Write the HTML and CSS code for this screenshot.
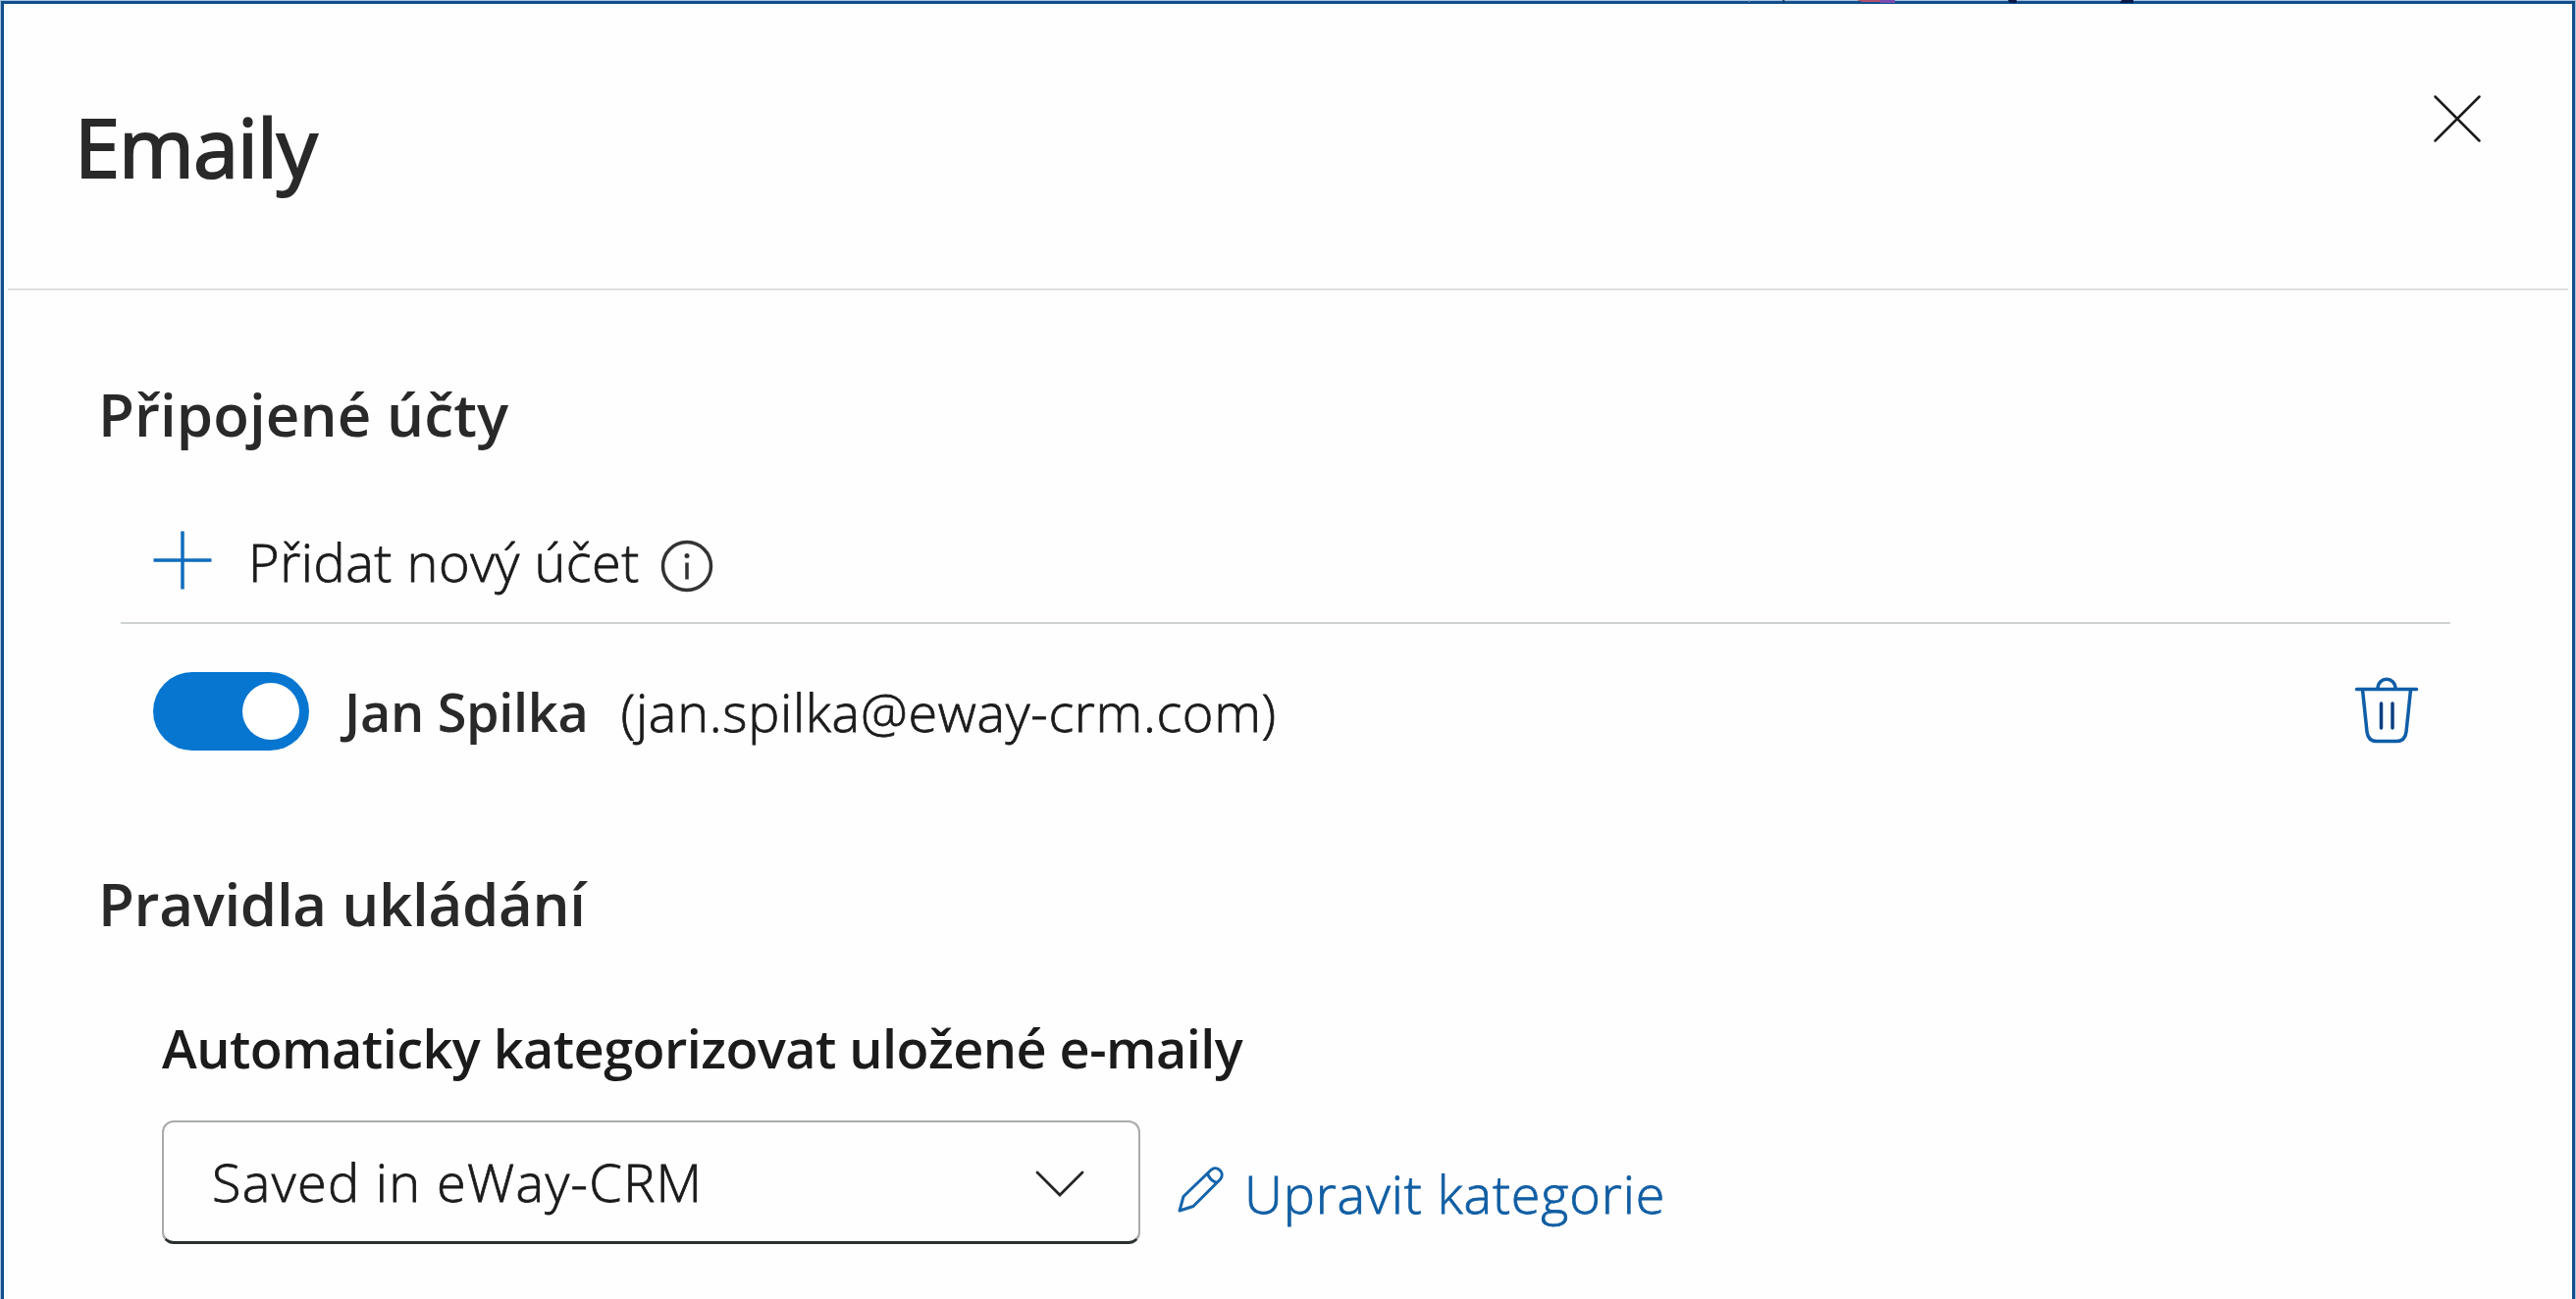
FILE: index.html
```
<!DOCTYPE html>
<html lang="cs">
<head>
    <meta charset="UTF-8">
    <meta name="viewport" content="width=device-width, initial-scale=1.0">
    <title>Emaily</title>
    <link rel="stylesheet" href="styles.css">
</head>
<body>
    <svg class="behind" width="500" height="5" viewBox="0 0 500 5">
        <path d="M42.500 0v2" stroke="#8fa6bf"/>
        <path d="M77.500 0v3" stroke="#123c66" stroke-width="2"/>
        <path d="M152 0h24v2h-18z" fill="#b0506e"/>
        <path d="M176 0h15v3h-15z" fill="#7a4bb0"/>
        <path d="M306 0h9v3h-7zM422 0h12v3h-14z" fill="#0b1c4a"/>
    </svg>
    <div class="panel">
        <div class="header">
            <h1>Emaily</h1>
            <button class="close" id="closeButton" aria-label="Zavřít">
                <svg width="48" height="48" viewBox="0 0 48 48" fill="none" stroke="#1b1b1b" stroke-width="2.500" stroke-linecap="round">
                    <path d="M1.500 1.500l45 45M46.500 1.500l-45 45"/>
                </svg>
            </button>
        </div>

        <h2>Připojené účty</h2>
        <div class="accounts">
            <div class="row add-row">
                <svg class="plus" width="60" height="60" viewBox="0 0 60 60" fill="none" stroke="#0f6cbd" stroke-width="3.500">
                    <path d="M30 0.500v59M0.500 30h59"/>
                </svg>
                <span class="add-text">Přidat nový účet</span>
                <svg class="info" width="54" height="54" viewBox="0 0 54 54" fill="none" stroke="#333" stroke-width="3.500">
                    <circle cx="27" cy="27" r="24.500"/>
                    <path d="M27 23.500v17"/>
                    <circle cx="27" cy="16.500" r="2.500" fill="#333" stroke="none"/>
                </svg>
            </div>
            <div class="row account-row">
                <div class="toggle"><div class="knob"></div></div>
                <span class="name">Jan Spilka</span>
                <span class="mail">(jan.spilka@eway-crm.com)</span>
                <svg class="trash" width="66" height="68" viewBox="0 0 66 68" fill="none" stroke="#0f5ea8" stroke-width="3.500" stroke-linecap="round">
                    <path d="M2.500 12.500h61"/>
                    <path d="M24 12c0-13 18-13 18 0"/>
                    <path d="M8.500 13l4.500 43c.8 6.500 4 9.500 10 9.500h20c6 0 9.200-3 10-9.500l4.500-43"/>
                    <path d="M27.500 27v25M39 27v25" stroke="#0b3f80"/>
                </svg>
            </div>
        </div>

        <h2 class="rules-title">Pravidla ukládání</h2>
        <div class="rules">
            <div class="label">Automaticky kategorizovat uložené e-maily</div>
            <div class="rules-line">
                <div class="select">
                    <span>Saved in eWay-CRM</span>
                    <svg width="50" height="28" viewBox="0 0 50 28" fill="none" stroke="#242424" stroke-width="2.800" stroke-linecap="round">
                        <path d="M2 2l23 23L48 2"/>
                    </svg>
                </div>
                <a class="edit" href="#">
                    <svg width="48" height="48" viewBox="0 0 48 48" fill="none" stroke="#1464ac" stroke-width="3" stroke-linejoin="round">
                        <path d="M2 46l4-14.500L34 4.500c6-5.500 15 3 9.500 9.500L16 41.500z"/>
                        <path d="M30.500 8c1.500 5 4.500 8 9.500 9.500"/>
                    </svg>
                    <span>Upravit kategorie</span>
                </a>
            </div>
        </div>
    </div>
</body>
</html>
```
FILE: styles.css
```
* {
    box-sizing: border-box;
}
body {
    margin: 0;
    padding: 1px 1px 0;
    height: 1324px;
    overflow: hidden;
    background: #a9c3dc;
    font-family: "Open Sans", "Noto Sans", sans-serif;
    font-size: 54px;
    font-weight: 300;
    color: #1b1b1b;
}
svg {
    display: block;
    flex: none;
}
.behind {
    position: absolute;
    top: 0;
    left: 1740px;
}
.panel {
    height: 1323px;
    border: 3px solid #0f4f8c;
    border-bottom: none;
    background: #fefefe;
}
.header {
    display: flex;
    justify-content: space-between;
    align-items: flex-start;
    height: 292px;
    margin: 0 4px;
    padding: 93px 89px 0 68px;
    border-bottom: 2px solid #e0e0e0;
}
h1 {
    margin: 12px 0 0;
    font-size: 83px;
    line-height: 80px;
    font-weight: 400;
    letter-spacing: -1px;
    color: #292929;
    -webkit-text-stroke: 2px #292929;
}
.close {
    padding: 0;
    border: none;
    background: none;
}
h2 {
    margin: 96px 0 0 96px;
    font-size: 60px;
    line-height: 60px;
    font-weight: 600;
    letter-spacing: 0.1px;
    color: #292929;
}
.accounts {
    margin: 56px 124px 0 119px;
}
.row {
    display: flex;
    align-items: center;
    padding-left: 33px;
    line-height: 60px;
}
.add-row {
    height: 128px;
    border-bottom: 2px solid #d0d3d3;
}
.add-text,
.mail,
.select span,
.edit span {
    -webkit-text-stroke: 0.8px currentColor;
}
.add-text {
    margin: 2px 0 0 37px;
    letter-spacing: 0.55px;
}
.info {
    margin: 12px 0 0 21px;
}
.account-row {
    height: 177px;
    padding-right: 32px;
}
.toggle {
    display: flex;
    justify-content: flex-end;
    align-items: center;
    width: 159px;
    height: 80px;
    padding-right: 10px;
    border-radius: 40px;
    background: #0676d0;
}
.knob {
    width: 58px;
    height: 58px;
    border-radius: 50%;
    background: #fff;
}
.name {
    margin-left: 36px;
    font-weight: 600;
    letter-spacing: -0.3px;
    color: #292929;
}
.mail {
    margin-left: 33px;
    letter-spacing: 0.7px;
}
.trash {
    margin: 0 0 2px auto;
}
.rules-title {
    margin-top: 78px;
    letter-spacing: -0.3px;
}
.rules {
    margin: 87px 0 0 161px;
}
.label {
    line-height: 60px;
    font-weight: 600;
    letter-spacing: -0.55px;
}
.rules-line {
    display: flex;
    margin-top: 44px;
}
.select {
    display: flex;
    justify-content: space-between;
    align-items: center;
    width: 997px;
    height: 126px;
    padding: 0 55px 2px 49px;
    border: 2px solid #a9abab;
    border-bottom: 3px solid #2a302e;
    border-radius: 12px;
    letter-spacing: 1.35px;
}
.select svg {
    margin-top: 6px;
}
.edit {
    display: flex;
    align-items: center;
    gap: 20px;
    margin: 21px 0 0 38px;
    color: #115ea3;
    text-decoration: none;
    letter-spacing: 0.85px;
}
.edit svg {
    margin-bottom: 8px;
}
```
